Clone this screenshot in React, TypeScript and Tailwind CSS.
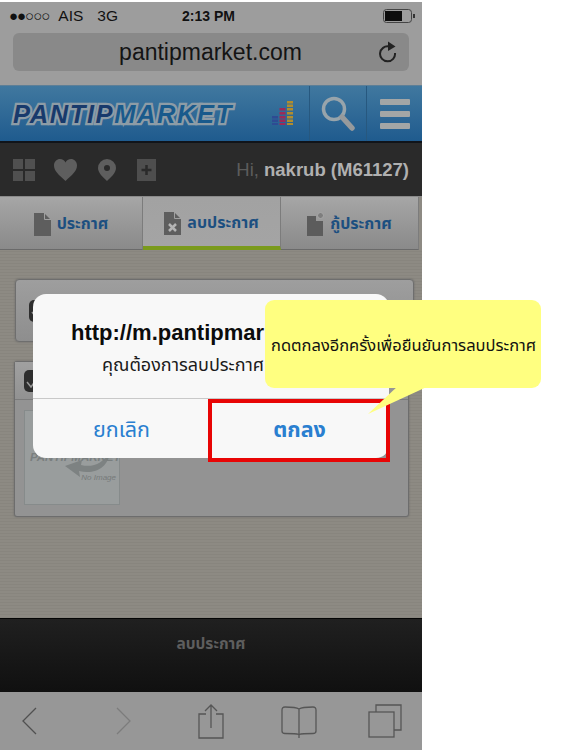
const thai = "font-['Noto_Sans_Thai','Liberation_Sans','DejaVu_Sans',sans-serif]";

function Grid() {
  return (
    <svg width="23" height="22" viewBox="0 0 23 22" fill="#505050">
      <rect x="0" y="0" width="10" height="10" />
      <rect x="12" y="0" width="10" height="10" />
      <rect x="0" y="12" width="10" height="10" />
      <rect x="12" y="12" width="10" height="10" />
    </svg>
  );
}
function Heart() {
  return (
    <svg width="23" height="22" viewBox="0 0 23 22" fill="#5e5e5e">
      <path d="M11.5 22C5 16 0 12 0 6.5 0 2.5 3 0 6 0c2.500 0 4.500 1.500 5.500 3.500C12.500 1.500 14.500 0 17 0c3 0 6 2.500 6 6.500C23 12 18 16 11.500 22z" />
    </svg>
  );
}
function Pin() {
  return (
    <svg width="18" height="22" viewBox="0 0 18 22">
      <path fillRule="evenodd" fill="#5e5e5e" d="M9 0a9 9 0 0 1 9 9c0 5-5 9-9 13C5 18 0 14 0 9a9 9 0 0 1 9-9zm0 6a3 3 0 1 0 0 6 3 3 0 0 0 0-6z" />
    </svg>
  );
}
function Plus() {
  return (
    <svg width="19" height="22" viewBox="0 0 19 22">
      <rect width="19" height="22" fill="#4e4e4e" />
      <path d="M9.500 6v10M4.500 11h10" stroke="#2a2a2a" strokeWidth="2.500" />
    </svg>
  );
}
function Doc({ kind }: { kind: "plain" | "x" | "plus" }) {
  return (
    <svg width="17" height="24" viewBox="0 0 17 24">
      {kind === "plus" ? (
        <path d="M0 4h9v5h7v15H0z" fill="#5c5c5c" />
      ) : (
        <path d="M0 1h10l7 7v16H0z" fill="#5e5e5e" />
      )}
      {kind !== "plus" && <path d="M10.500 1v6.500H17" fill="none" stroke="#a0a0a0" strokeWidth="1" />}
      {kind === "x" && <path d="M5 13l7 7M12 13l-7 7" stroke="#b5b5b5" strokeWidth="2.500" />}
      {kind === "plus" && <circle cx="13.500" cy="3.500" r="3" fill="#7e7e7e" stroke="#a8a8a8" />}
    </svg>
  );
}
function Tab({ kind, label, active, width }: { kind: "plain" | "x" | "plus"; label: string; active?: boolean; width: string }) {
  return (
    <div
      className={`${width} shrink-0 flex items-center justify-center gap-[6px] h-full border-r border-[#7c7c7c] bg-gradient-to-b pt-[3px] ${
        active ? "from-[#a2a2a2] to-[#a4a4a4] border-b-[4px] border-b-[#7a9a1c]" : "from-[#a6a6a6] to-[#8a8a8a] border-b-[1px] border-b-[#6a6a6a] pb-[2px]"
      }`}
    >
      <Doc kind={kind} />
      <span className={`${thai} text-[16px] font-bold text-[#1c4f80]`}>{label}</span>
    </div>
  );
}
function CardGlyph() {
  return (
    <svg width="14" height="22" viewBox="0 0 14 22">
      <rect width="14" height="22" rx="5" fill="#2e2e2e" />
      <path d="M3 12l4 5 5-7" fill="none" stroke="#9a9a9a" strokeWidth="1.500" />
    </svg>
  );
}

export default function App() {
  return (
    <div className="relative w-[565px] h-[752px] bg-white overflow-hidden font-['Liberation_Sans',sans-serif]">
      <div className="w-[422px] h-[750px] flex flex-col pt-[2px]">
        {/* browser chrome */}
        <div className="h-[83px] bg-[#9d9d9d] flex flex-col shrink-0">
          <div className="h-[27px] flex items-center justify-between pl-[9px] pr-[6px] text-[#111] text-[15.500px]">
            <div className="flex items-center">
              <span className="text-[15px] tracking-[-1px] leading-none">●●○○○</span>
              <span className="ml-[9px]">AIS</span>
              <span className="ml-[14px]">3G</span>
            </div>
            <span className="font-bold text-[14px] absolute left-[182px] top-[6px]">2:13 PM</span>
            <svg width="33" height="14" viewBox="0 0 33 14">
              <rect x="0.500" y="0.500" width="28" height="13" rx="3" fill="none" stroke="#444" />
              <rect x="2" y="2" width="17" height="10" fill="#0d0d0d" />
              <rect x="30" y="5" width="2" height="4" fill="#333" />
            </svg>
          </div>
          <div className="relative mx-[13px] h-[38px] mt-[4px] rounded-[6px] bg-[#898989] flex items-center justify-center text-[23px] text-[#141414]">
            <span className="pr-[1px]">pantipmarket.com</span>
            <svg className="absolute right-[10px] top-[7px]" width="20" height="24" viewBox="0 0 20 24">
              <path d="M16 13A7.500 7.500 0 1 1 10 6.500" fill="none" stroke="#222" strokeWidth="2" />
              <path d="M9 1.500l7.500 5L9 11z" fill="#222" />
            </svg>
          </div>
        </div>

        {/* site header */}
        <div className="h-[58px] shrink-0 flex bg-gradient-to-b from-[#40789f] to-[#1f5b8e] border-t border-t-[#5d7f97] border-b-[2px] border-b-[#10141a]">
          <div className="flex-1 flex items-center pl-[13px] pt-[2px]">
            <span className="text-[25.500px] font-bold italic leading-none tracking-[1.600px] text-[#183a6c] [-webkit-text-stroke:4.500px_#8d9ca6] [paint-order:stroke_fill]">
              PANTIP<span className="text-[#195a8c]">MARKET</span>
            </span>
          </div>
          <div className="w-[52px] flex items-center justify-center pb-[2px]">
            <svg width="22" height="24" viewBox="0 0 22 24">
              <g fill="#2e4b93"><rect x="0" y="15" width="6" height="2.500" /><rect x="0" y="18.500" width="6" height="2.500" /><rect x="0" y="22" width="6" height="2" /></g>
              <g fill="#9c2a58"><rect x="7.500" y="7" width="6" height="2.500" /><rect x="7.500" y="11" width="6" height="2.500" /><rect x="7.500" y="15" width="6" height="2.500" /><rect x="7.500" y="18.500" width="6" height="2.500" /><rect x="7.500" y="22" width="6" height="2" /></g>
              <g fill="#b18d2d"><rect x="15" y="0" width="6" height="2.500" /><rect x="15" y="3.500" width="6" height="2.500" /><rect x="15" y="7" width="6" height="2.500" /><rect x="15" y="11" width="6" height="2.500" /><rect x="15" y="15" width="6" height="2.500" /><rect x="15" y="18.500" width="6" height="2.500" /><rect x="15" y="22" width="6" height="2" /></g>
            </svg>
          </div>
          <div className="w-[57px] border-l border-l-[#27587f] flex items-center justify-center">
            <svg width="34" height="36" viewBox="0 0 34 36">
              <circle cx="13" cy="13" r="10.500" fill="none" stroke="#98a4ab" strokeWidth="3.500" />
              <path d="M21 21l10 11" stroke="#979a9c" strokeWidth="5.500" strokeLinecap="round" />
            </svg>
          </div>
          <div className="w-[56px] border-l border-l-[#27587f] flex flex-col items-center justify-center gap-[6px]">
            <div className="w-[30px] h-[6px] rounded-[1px] bg-[#a3a6a6]" />
            <div className="w-[30px] h-[6px] rounded-[1px] bg-[#a3a6a6]" />
            <div className="w-[30px] h-[6px] rounded-[1px] bg-[#a3a6a6]" />
          </div>
        </div>

        {/* user bar */}
        <div className="h-[53px] shrink-0 bg-[#2a2a2a] flex items-center pl-[13px] pr-[13px]">
          <Grid />
          <div className="ml-[18px]"><Heart /></div>
          <div className="ml-[21px]"><Pin /></div>
          <div className="ml-[21px]"><Plus /></div>
          <span className="ml-auto text-[18.500px] text-[#5c5c5c]">
            Hi, <b className="text-[#b0b0b0]">nakrub (M61127)</b>
          </span>
        </div>

        {/* tabs */}
        <div className="h-[54px] shrink-0 flex border-t border-t-[#8a8a8a] bg-[#8d8a83]">
          <Tab kind="plain" label="ประกาศ" width="w-[143px]" />
          <Tab kind="x" label="ลบประกาศ" active width="w-[138px]" />
          <Tab kind="plus" label="กู้ประกาศ" width="w-[138px]" />
        </div>

        {/* content */}
        <div className="flex-1 bg-[#8a8780] bg-[repeating-linear-gradient(0deg,#88857e_0px,#88857e_1px,#8d8a83_1px,#8d8a83_3px)] pt-[29px] px-[15px]">
          <div className="h-[63px] mr-[-7px] rounded-[4px] border border-[#6e6e6e] shadow-[0_0_2px_#666] bg-gradient-to-b from-[#9e9e9e] to-[#8e8e8e] flex items-center pl-[13px]">
            <CardGlyph />
            <span className={`${thai} ml-[106px] text-[18px] text-[#555]`}>ลบทั้งหมด</span>
          </div>
          <div className="mt-[19px] h-[156px] mr-[-2px] ml-[-1px] rounded-[3px] border border-[#6d6d6d] shadow-[0_0_2px_#666] bg-[#939393]">
            <div className="h-[38px] border-b border-b-[#7b7b7b] flex items-center pl-[9px] bg-gradient-to-b from-[#a0a0a0] to-[#929292]">
              <CardGlyph />
            </div>
            <div className="relative ml-[9px] mt-[10px] w-[96px] h-[95px] border border-[#868b8b] bg-[#999d9d] overflow-hidden">
              <svg className="absolute left-[38px] top-[42px]" width="50" height="28" viewBox="0 0 50 28">
                <path d="M46 0c0 14-14 22-30 18l1 6L2 13l17-6-1 5c12 3 22-2 28-12z" fill="#7d8282" />
              </svg>
              <span className="absolute left-[5px] top-[41px] text-[11.500px] font-bold italic leading-none text-[#7a7f7f] whitespace-nowrap">PANTIPMARKET</span>
              <span className="absolute right-[3px] top-[63px] text-[8px] italic leading-none text-[#767a7a]">No Image</span>
            </div>
          </div>
        </div>

        {/* action bar */}
        <div className="h-[74px] shrink-0 bg-gradient-to-b from-[#202020] to-[#101010] border-t-[1px] border-t-[#050505] flex justify-center pt-[12px]">
          <span className={`${thai} text-[15.500px] font-bold text-[#5e5e5e] leading-[28px]`}>ลบประกาศ</span>
        </div>

        {/* browser toolbar */}
        <div className="h-[58px] shrink-0 bg-[#979797] flex items-center pl-[21px]">
          <svg width="16" height="28" viewBox="0 0 16 28"><path d="M15 1L2 14l13 13" fill="none" stroke="#505050" strokeWidth="1.300" /></svg>
          <svg className="ml-[79px]" width="16" height="28" viewBox="0 0 16 28"><path d="M1 1l13 13L1 27" fill="none" stroke="#7c7c7c" strokeWidth="1.300" /></svg>
          <svg className="ml-[66px] mb-[1px]" width="26" height="36" viewBox="0 0 26 36">
            <path d="M8 11H1v24h24V11h-7M13 25V2M7 8l6-6 6 6" fill="none" stroke="#565656" strokeWidth="1.300" />
          </svg>
          <svg className="ml-[57px] mt-[1px]" width="36" height="32" viewBox="0 0 36 32">
            <path d="M18 3C15 1 9 1 4 1 2 1 1 2 1 4v21c0 2 1 2.500 3 2.500 5 0 11 0 14 1 3-1 9-1 14-1 2 0 3-.5 3-2.500V4c0-2-1-3-3-3-5 0-11 0-14 2zM18 3v29" fill="none" stroke="#565656" strokeWidth="1.300" />
          </svg>
          <svg className="ml-[51px]" width="34" height="34" viewBox="0 0 34 34">
            <path d="M8 8V1h25v25h-7" fill="none" stroke="#565656" strokeWidth="1.300" />
            <rect x="1" y="8" width="25" height="25" fill="none" stroke="#565656" strokeWidth="1.300" />
          </svg>
        </div>
      </div>

      {/* alert dialog */}
      <div className="absolute left-[33px] top-[294px] w-[356px] h-[164px] rounded-[13px] bg-[#f8f8f8] flex flex-col">
        <div className="h-[105px] border-b border-b-[#c9c9c9] flex flex-col pt-[24px]">
          <div className="pl-[38px] text-[22px] font-bold text-[#0c0c0c] leading-[30px] whitespace-nowrap">http://m.pantipmarket.com</div>
          <div className={`${thai} pl-[69px] text-[18px] text-[#1a1a1a] leading-[26px] mt-[5px] whitespace-nowrap`}>คุณต้องการลบประกาศนี้หรือไม่</div>
        </div>
        <div className={`${thai} flex-1 flex items-center pt-[5px] text-[21.500px] text-[#2a7fd0]`}>
          <div className="w-[177px] text-center">ยกเลิก</div>
          <div className="flex-1 text-center font-bold">ตกลง</div>
        </div>
      </div>

      {/* red highlight */}
      <div className="absolute left-[208px] top-[399px] w-[182px] h-[63px] border-[4px] border-[#e80505]" />

      {/* callout */}
      <svg className="absolute left-[340px] top-[385px]" width="95" height="32" viewBox="0 0 95 32">
        <path d="M59 0h32L28 29z" fill="#ffff80" />
      </svg>
      <div className="absolute left-[265px] top-[300px] w-[276px] h-[88px] rounded-[9px] bg-[#ffff80] pl-[6px] pt-[34px]">
        <span className={`${thai} text-[16.500px] leading-[22px] text-[#111] whitespace-nowrap`}>กดตกลงอีกครั้งเพื่อยืนยันการลบประกาศ</span>
      </div>
    </div>
  );
}
